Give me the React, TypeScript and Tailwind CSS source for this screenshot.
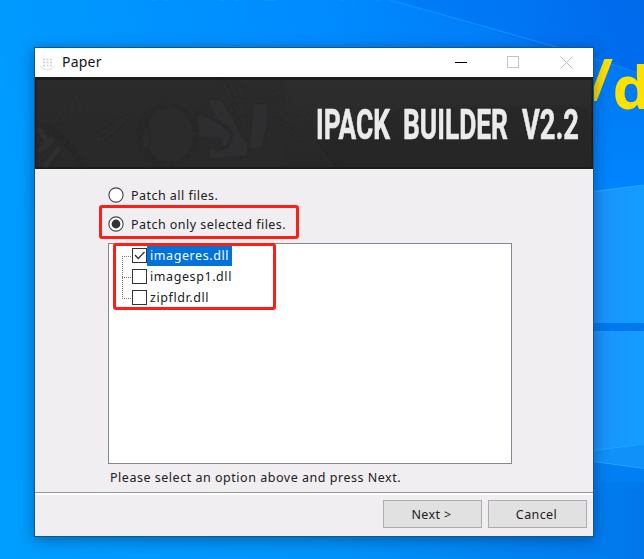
import type { ReactNode } from "react";

function Wallpaper() {
  return (
    <svg className="absolute inset-0" width="644" height="559" viewBox="0 0 644 559" aria-hidden="true">
      <defs>
        <linearGradient id="sky" x1="0" y1="0.25" x2="1" y2="0">
          <stop offset="0" stopColor="#009cff" />
          <stop offset="0.5" stopColor="#008cff" />
          <stop offset="0.8" stopColor="#007cf8" />
          <stop offset="1" stopColor="#006cec" />
        </linearGradient>
        <linearGradient id="right" x1="0" y1="0" x2="0" y2="1">
          <stop offset="0" stopColor="#0078f2" />
          <stop offset="1" stopColor="#0086ff" />
        </linearGradient>
        <linearGradient id="floor" x1="0" y1="0" x2="1" y2="0">
          <stop offset="0" stopColor="#009eff" />
          <stop offset="0.5" stopColor="#0094fa" />
          <stop offset="1" stopColor="#0078ec" />
        </linearGradient>
        <linearGradient id="pane" x1="0" y1="0" x2="1" y2="0">
          <stop offset="0" stopColor="#1a92fb" />
          <stop offset="1" stopColor="#149dff" />
        </linearGradient>
      </defs>
      <rect width="644" height="559" fill="url(#sky)" />
      <path d="M390 0 L644 78 V0Z" fill="#0060e6" fillOpacity=".2" />
      <path d="M390 0 L560 48 L644 75" stroke="#159aff" strokeOpacity=".6" fill="none" strokeWidth="1.5" />
      <path d="M590 58 L644 75 V196 H590Z" fill="url(#right)" />
      <path d="M590 192 L644 185 V323 H590Z" fill="url(#pane)" />
      <path d="M590 192 L644 185" stroke="#27a6ff" />
      <rect x="590" y="323" width="54" height="8" fill="#0078ee" />
      <path d="M590 331 H644 V446 L590 452Z" fill="url(#pane)" />
      <path d="M590 331.5H644" stroke="#2098fa" />
      <rect y="480" width="644" height="79" fill="url(#floor)" />
      <path d="M590 451 L644 443 V469 L590 461Z" fill="#0f91f9" />
      <path d="M590 451 L644 444 M590 461 L644 468.5" stroke="#1ba8ff" fill="none" />
      <path d="M590 462 L644 469 V482 H590Z" fill="#007ff2" />
      <path d="M152 0h6M163 0h5M219 0h5M235 0h4M264 0h12M340 0h3M377 0h3" stroke="#39b0bd" strokeOpacity=".4" strokeWidth="1.5" />
      <g fontFamily="Noto Sans, sans-serif" fontWeight="700" fontSize="60" fill="#ffe100">
        <text x="588" y="101">/</text>
        <text x="612.5" y="109">d</text>
      </g>
    </svg>
  );
}

function TitleBar() {
  return (
    <header className="flex h-[29px] shrink-0 items-center bg-white">
      <svg className="ml-[3px]" width="20" height="29" viewBox="0 0 20 29">
        <path d="M2 18 Q9.500 26 17 18" stroke="#e2e2e2" fill="none" />
        <path d="M5 11.500h9M5 14.500h9M5 17.500h9" stroke="#d0d0d0" strokeWidth="1.300" strokeDasharray="2 1.500" />
      </svg>
      <h1 className="-mt-0.5 ml-1 font-['Noto_Sans',sans-serif] text-[14px] leading-5 tracking-[0.2px] text-[#151515]">Paper</h1>
      <svg className="ml-auto" width="160" height="29" viewBox="0 0 160 29" fill="none">
        <path d="M22 14.5h12" stroke="#000" />
        <rect x="74.5" y="8.500" width="11" height="11" stroke="#c4c4c4" />
        <path d="M127.5 8.500l12 12M139.5 8.500l-12 12" stroke="#bcbcbc" />
      </svg>
    </header>
  );
}

function Banner() {
  return (
    <svg className="block shrink-0" width="558" height="92" viewBox="0 0 558 92">
      <defs>
        <linearGradient id="bn" x1="0" y1="0" x2="0" y2="1">
          <stop offset="0" stopColor="#2d2d2d" />
          <stop offset="1" stopColor="#272727" />
        </linearGradient>
        <filter id="soft"><feGaussianBlur stdDeviation="1" /></filter>
      </defs>
      <rect width="558" height="92" fill="#1d1c1d" />
      <rect x="1.5" y="3" width="555" height="87" fill="url(#bn)" />
      <rect x="1.5" y="3" width="250" height="87" fill="#2a2a2a" fillOpacity=".6" />
      <g filter="url(#soft)">
        <g opacity=".6">
          <ellipse cx="132" cy="58" rx="29" ry="30" fill="#262626" />
          <ellipse cx="134" cy="58" rx="24" ry="27" fill="#2e2e2e" />
          <ellipse cx="111" cy="61" rx="4" ry="12" stroke="#252525" strokeWidth="2" fill="#303031" />
          <path d="M174 24l11-1 12 18 7 16 8 9v12l-37 3v-9l13-3-1-8-22-2-2-22 18 3z" fill="#353437" />
          <path d="M160 36q22 4 34 18M186 48q13 2 10 14t-16 10" stroke="#252525" strokeWidth="3" fill="none" />
          <path d="M219 28h13v20l-6 22-11 2z" fill="#353437" />
          <path d="M188 5l22 43M196 8l13 30M205 10l5 28" stroke="#303031" strokeWidth="2" />
          <path d="M3 48q28 7 44 42" stroke="#252525" strokeWidth="3" fill="none" />
          <path d="M3 52l10 12M4 74l14-12M9 90l16-20" stroke="#343436" strokeWidth="5" fill="none" />
          <path d="M92 39L66 57M91 43L67 63M55 60l11 3M28 24q6 12-2 22M40 17l7 20" stroke="#333334" strokeWidth="1.5" fill="none" />
          <path d="M236 19q12-10 16 5t-13 14M246 45l20 18M256 38q14-7 19 7" stroke="#303031" strokeWidth="2" fill="none" />
        </g>
        <path d="M282 62l40-12 56-20h177v59H302z" fill="#202020" fillOpacity=".45" />
      </g>
      <g fontFamily="Roboto, sans-serif" fontWeight="700" fontSize="42" fill="#ebebeb" stroke="#ebebeb" strokeWidth=".6">
        <text x="281" y="61.5" textLength="74" lengthAdjust="spacingAndGlyphs">IPACK</text>
        <text x="368" y="61.5" textLength="105" lengthAdjust="spacingAndGlyphs">BUILDER</text>
        <text x="487" y="61.5" textLength="57" lengthAdjust="spacingAndGlyphs">V2.2</text>
      </g>
    </svg>
  );
}

function Radio({ checked = false, children }: { checked?: boolean; children: ReactNode }) {
  return (
    <label className="flex h-[29px] items-center gap-[7px]">
      <svg width="16" height="16" viewBox="0 0 16 16">
        <circle cx="8" cy="8" r="7.1" fill="#fff" stroke="#444" strokeWidth="1.1" />
        {checked && <circle cx="8" cy="8" r="4.4" fill="#333" />}
      </svg>
      <span className="pt-0.5 tracking-[0.46px]">{children}</span>
    </label>
  );
}

const files = [
  { name: "imageres.dll", checked: true },
  { name: "imagesp1.dll", checked: false },
  { name: "zipfldr.dll", checked: false },
];

function FileTree() {
  return (
    <div className="relative h-[221px] w-[404px] border border-[#828790] bg-white pt-0.5">
      <svg className="absolute left-[13px] top-3" width="11" height="43" viewBox="0 0 11 43">
        <path d="M.5 0V42.5M0 .5H10M0 21.5H10M0 42.5H10" stroke="#777" strokeDasharray="1 1" fill="none" />
      </svg>
      <ul>
        {files.map((f) => (
          <li key={f.name} className="flex h-[20.8px] items-center pl-[23px]">
            <svg className="-mt-px" width="15" height="15" viewBox="0 0 15 15">
              <rect x=".5" y=".5" width="14" height="14" fill="#fff" stroke="#333" />
              {f.checked && <path d="M3 7l3.2 3.5L12.5 4" stroke="#333" strokeWidth="1.3" fill="none" />}
            </svg>
            <span
              className={
                f.checked
                  ? "flex h-5 w-[85px] items-center bg-[#0072d9] pl-[3px] tracking-[0.58px] text-white"
                  : "flex h-5 items-center pl-[3px] tracking-[0.58px]"
              }
            >
              {f.name}
            </span>
          </li>
        ))}
      </ul>
      <div className="absolute -top-px left-1 h-[67px] w-[163px] rounded-[3px] border-[3px] border-[#fb2015]" />
    </div>
  );
}

function PushButton({ children }: { children: ReactNode }) {
  return (
    <button className="h-7 w-[99px] border border-[#adadad] bg-[#e2e1e2] pr-0.5 pt-0.5 tracking-[0.4px] text-[#1b1b1b]">{children}</button>
  );
}

export default function App() {
  return (
    <main className="relative h-[559px] w-[644px] overflow-hidden bg-[#008cff] pl-[34px] pt-[47px]">
      <Wallpaper />
      <section className="relative flex h-[490px] w-[560px] flex-col border border-[#1b5585] bg-[#f0eef1] font-['Noto_Sans',sans-serif] text-[12.5px] leading-4 text-[#202020] shadow-[0_3px_14px_rgba(0,35,80,0.45)]">
        <TitleBar />
        <Banner />
        <div className="flex h-[323px] shrink-0 flex-col pl-[73px] pt-[11px]">
          <Radio>Patch all files.</Radio>
          <div className="relative">
            <Radio checked>Patch only selected files.</Radio>
            <div className="absolute -left-[9px] -top-[4px] h-[34px] w-[200px] rounded-[3px] border-[3px] border-[#fb2015]" />
          </div>
          <div className="mt-[5px]">
            <FileTree />
          </div>
          <p className="ml-0.5 mt-1.5 tracking-[0.52px]">Please select an option above and press Next.</p>
        </div>
        <footer className="flex flex-1 justify-end border-t border-[#96959a] pr-1.5 shadow-[inset_0_2px_0_white]">
          <div className="flex gap-1.5 pt-[7px]">
            <PushButton>Next &gt;</PushButton>
            <PushButton>Cancel</PushButton>
          </div>
        </footer>
      </section>
    </main>
  );
}
